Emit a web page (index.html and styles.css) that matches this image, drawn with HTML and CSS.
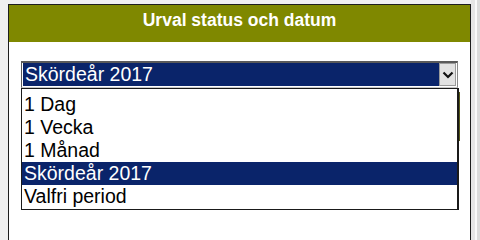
FILE: index.html
```html
<!DOCTYPE html>
<html lang="sv">
<head>
<meta charset="utf-8">
<title>Urval status och datum</title>
<link rel="stylesheet" href="styles.css">
</head>
<body>
<div class="page">
  <div class="panel">
    <div class="panel-header">Urval status och datum</div>
    <div class="panel-body">
      <div class="select-wrap">
        <div class="select">
          <div class="select-value">Skördeår 2017</div>
          <div class="select-button">
            <svg width="12" height="8" viewBox="0 0 12 8"><path d="M1.5 1.5 L6 6 L10.5 1.5" fill="none" stroke="#111" stroke-width="2.2"/></svg>
          </div>
        </div>
        <div class="behind-edge"></div>
        <ul class="dropdown">
          <li class="option">1 Dag</li>
          <li class="option">1 Vecka</li>
          <li class="option">1 Månad</li>
          <li class="option selected">Skördeår 2017</li>
          <li class="option">Valfri period</li>
        </ul>
      </div>
    </div>
  </div>
  <div class="scroll-strip"></div>
</div>
</body>
</html>
```
FILE: styles.css
```css
html, body {
  margin: 0;
  padding: 0;
  background: #f0f0f0;
  font-family: "Liberation Sans", Arial, sans-serif;
  overflow: hidden;
}
.page {
  display: flex;
  min-height: 100vh;
  padding-left: 8px;
  padding-top: 4px;
  box-sizing: border-box;
}
.panel {
  width: 463px;
  box-sizing: border-box;
  border: 1px solid #1e1e1e;
  border-bottom: none;
  background: #ffffff;
  flex: none;
}
.panel-header {
  height: 37px;
  box-sizing: border-box;
  background: #7f8800;
  color: #ffffff;
  font-weight: bold;
  font-size: 17.5px;
  text-align: center;
  padding-top: 5px;
}
.panel-body {
  padding: 19px 0 0 12px;
}
.select-wrap {
  position: relative;
  width: 437px;
}
.select {
  display: flex;
  height: 27px;
  box-sizing: border-box;
  border-style: solid;
  border-width: 2px 1px 1px 1px;
  border-color: #5a5a5a #8a8a8a #c8c8c8 #5a5a5a;
  background: #ffffff;
  padding: 0 1px 1px 1px;
}
.select-value {
  flex: 1;
  background: #0a246a;
  color: #ffffff;
  font-size: 19.5px;
  line-height: 23px;
  padding-left: 2px;
}
.select-button {
  width: 17px;
  box-sizing: border-box;
  border: 1px solid #9a9a9a;
  background: #e2e2e2;
  display: flex;
  align-items: center;
  justify-content: center;
}
.behind-edge {
  position: absolute;
  left: 437px;
  top: 31px;
  width: 2px;
  height: 49px;
  background: #56591a;
}
.dropdown {
  position: absolute;
  left: 0;
  top: 27px;
  width: 438px;
  height: 122px;
  box-sizing: border-box;
  margin: 0;
  padding: 4px 0 0 0;
  list-style: none;
  background: #ffffff;
  border: 1px solid #1a1a1a;
  border-right-width: 2px;
}
.option {
  font-size: 19.5px;
  line-height: 23px;
  height: 23px;
  padding-left: 2px;
  color: #000000;
}
.option.selected {
  background: #0a246a;
  color: #ffffff;
}
.scroll-strip {
  flex: 1;
  margin-top: -4px;
  background: linear-gradient(to right, #e6e6e6 0, #e6e6e6 4px, #fafafa 4px, #fafafa 6px, #dcdcdc 6px);
}
```
